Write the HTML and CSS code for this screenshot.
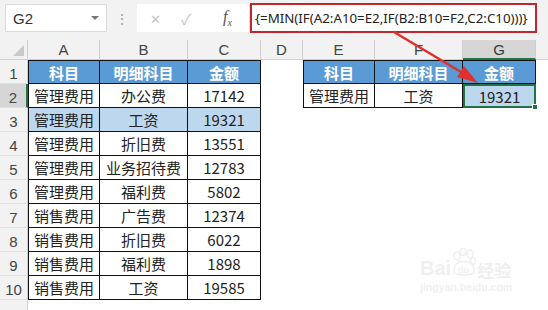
FILE: index.html
```html
<!DOCTYPE html>
<html lang="zh-CN">
<head>
  <meta charset="UTF-8" />
  <title>MIN IF</title>
  <link rel="stylesheet" href="styles.css">
</head>
<body>
  <div class="app">
    <div class="formula-bar">
      <div class="name-box">
        <span>G2</span>
        <span class="drop"></span>
      </div>
      <div class="grip">⋮</div>
      <div class="fx-buttons">
        <span class="btn-x">✕</span>
        <span class="btn-ok">✓</span>
        <span class="btn-fx"><i>f</i><sub>x</sub></span>
      </div>
      <div class="formula">{=MIN(IF(A2:A10=E2,IF(B2:B10=F2,C2:C10)))}</div>
    </div>

    <div class="sheet">
      <div class="corner"><span class="tri"></span></div>
      <div class="col-h">A</div>
      <div class="col-h">B</div>
      <div class="col-h">C</div>
      <div class="col-h">D</div>
      <div class="col-h">E</div>
      <div class="col-h">F</div>
      <div class="col-h sel">G</div>
      <div class="col-h last"></div>

      <!-- row 1 -->
      <div class="row-h">1</div>
      <div class="c t tl tt head">科目</div>
      <div class="c t tt head">明细科目</div>
      <div class="c t tt head">金额</div>
      <div class="c"></div>
      <div class="c t tl tt head">科目</div>
      <div class="c t tt head">明细科目</div>
      <div class="c t tt head">金额</div>
      <div class="c"></div>

      <!-- row 2 -->
      <div class="row-h sel">2</div>
      <div class="c t tl">管理费用</div>
      <div class="c t">办公费</div>
      <div class="c t">17142</div>
      <div class="c"></div>
      <div class="c t tl">管理费用</div>
      <div class="c t">工资</div>
      <div class="c t active">19321<span class="handle"></span></div>
      <div class="c"></div>

      <!-- row 3 -->
      <div class="row-h">3</div>
      <div class="c t tl hl">管理费用</div>
      <div class="c t hl">工资</div>
      <div class="c t hl">19321</div>
      <div class="c"></div><div class="c"></div><div class="c"></div><div class="c"></div><div class="c"></div>

      <div class="row-h">4</div>
      <div class="c t tl">管理费用</div>
      <div class="c t">折旧费</div>
      <div class="c t">13551</div>
      <div class="c"></div><div class="c"></div><div class="c"></div><div class="c"></div><div class="c"></div>

      <div class="row-h">5</div>
      <div class="c t tl">管理费用</div>
      <div class="c t">业务招待费</div>
      <div class="c t">12783</div>
      <div class="c"></div><div class="c"></div><div class="c"></div><div class="c"></div><div class="c"></div>

      <div class="row-h">6</div>
      <div class="c t tl">管理费用</div>
      <div class="c t">福利费</div>
      <div class="c t">5802</div>
      <div class="c"></div><div class="c"></div><div class="c"></div><div class="c"></div><div class="c"></div>

      <div class="row-h">7</div>
      <div class="c t tl">销售费用</div>
      <div class="c t">广告费</div>
      <div class="c t">12374</div>
      <div class="c"></div><div class="c"></div><div class="c"></div><div class="c"></div><div class="c"></div>

      <div class="row-h">8</div>
      <div class="c t tl">销售费用</div>
      <div class="c t">折旧费</div>
      <div class="c t">6022</div>
      <div class="c"></div><div class="c"></div><div class="c"></div><div class="c"></div><div class="c"></div>

      <div class="row-h">9</div>
      <div class="c t tl">销售费用</div>
      <div class="c t">福利费</div>
      <div class="c t">1898</div>
      <div class="c"></div><div class="c"></div><div class="c"></div><div class="c"></div><div class="c"></div>

      <div class="row-h">10</div>
      <div class="c t tl">销售费用</div>
      <div class="c t">工资</div>
      <div class="c t">19585</div>
      <div class="c"></div><div class="c"></div><div class="c"></div><div class="c"></div><div class="c"></div>

      <div class="row-h"></div>
    </div>

    <!-- red arrow pointing from formula to G1 -->
    <svg class="arrow" width="548" height="310" viewBox="0 0 548 310">
      <line x1="394" y1="32" x2="466" y2="75" stroke="#e0302d" stroke-width="2.5" />
      <polygon points="478,83 457,77 464,66" fill="#e0302d" />
    </svg>

    <div class="watermark">
      <div class="wm-logo">
        <span>Bai</span>
        <svg width="26" height="30" viewBox="0 0 26 30">
          <g fill="none" stroke="#efefef" stroke-width="1.5">
            <ellipse cx="6" cy="8" rx="3" ry="4" />
            <ellipse cx="12" cy="4" rx="3" ry="3.5" />
            <ellipse cx="19" cy="6" rx="3" ry="4" />
            <ellipse cx="22" cy="13" rx="2.5" ry="3.5" />
            <path d="M3 24 C3 15 9 12 13 14 C18 12 24 16 23 24 C22 28 4 28 3 24 Z" />
          </g>
          <text x="7" y="25" font-size="9" fill="#efefef" font-family="Liberation Sans, sans-serif">du</text>
        </svg>
        <span class="wm-cn">经验</span>
      </div>
      <div class="wm-url">jingyan.baidu.com</div>
    </div>
  </div>
</body>
</html>
```

FILE: styles.css
```css
* {
  box-sizing: border-box;
}

body {
  margin: 0;
  background: #fff;
  font-family: "Noto Sans CJK SC", "Liberation Sans", sans-serif;
}

.app {
  position: relative;
  width: 548px;
  height: 310px;
  overflow: hidden;
  background: #fff;
}

/* formula bar */

.formula-bar {
  display: flex;
  align-items: center;
  height: 40px;
  padding: 0 11px 4px 5px;
  background: #f2f2f2;
}

.name-box {
  display: flex;
  align-items: center;
  justify-content: space-between;
  width: 102px;
  height: 28px;
  padding: 0 7px 0 7px;
  background: #fff;
  border: 1px solid #dcdcdc;
  font-family: "Liberation Sans", sans-serif;
  font-size: 15px;
  color: #333;
}

.drop {
  width: 0;
  height: 0;
  border-left: 4px solid transparent;
  border-right: 4px solid transparent;
  border-top: 4px solid #777;
}

.grip {
  width: 30px;
  text-align: center;
  color: #a0a0a0;
  font-size: 14px;
}

.fx-buttons {
  display: flex;
  align-items: center;
  width: 113px;
  height: 28px;
  padding-left: 13px;
  background: #fff;
  border-right: 1px solid #e0e0e0;
}

.btn-x {
  width: 31px;
  color: #c4c4c4;
  font-size: 13px;
}

.btn-ok {
  width: 42px;
  color: #c4c4c4;
  font-size: 15px;
}

.btn-fx {
  font-family: "Liberation Serif", serif;
  color: #555;
  font-size: 16px;
}

.btn-fx sub {
  font-size: 10px;
  font-style: italic;
}

.formula {
  flex: 1;
  height: 30px;
  padding: 0 0 0 3px;
  border: 2px solid #c1272d;
  background: #fff;
  font-family: "Noto Sans", sans-serif;
  font-size: 13.3px;
  line-height: 26px;
  color: #222;
  white-space: nowrap;
  overflow: hidden;
}

/* sheet grid */

.sheet {
  display: grid;
  grid-template-columns: 28px 72px 88px 73px 42px 72px 88px 73px 12px;
  grid-template-rows: 20px repeat(10, 24px) 30px;
}

.corner {
  position: relative;
  background: #f2f2f2;
  border-right: 1px solid #d0d0d0;
  border-bottom: 1px solid #d0d0d0;
}

.tri {
  position: absolute;
  right: 3px;
  bottom: 3px;
  width: 0;
  height: 0;
  border-left: 11px solid transparent;
  border-bottom: 11px solid #c8c8c8;
}

.col-h {
  display: flex;
  align-items: center;
  justify-content: center;
  background: #f2f2f2;
  border-right: 1px solid #d0d0d0;
  border-bottom: 1px solid #d0d0d0;
  font-family: "Liberation Sans", sans-serif;
  font-size: 15px;
  color: #444;
}

.col-h.sel {
  background: #d6d6d6;
  border-bottom: 2px solid #217346;
  color: #3a3a3a;
}

.col-h.last {
  border-right: none;
}

.row-h {
  display: flex;
  align-items: flex-end;
  justify-content: center;
  padding-bottom: 1px;
  background: #f2f2f2;
  border-right: 1px solid #d0d0d0;
  border-bottom: 1px solid #e0e0e0;
  font-family: "Liberation Sans", sans-serif;
  font-size: 15px;
  color: #444;
}

.row-h.sel {
  background: #d6d6d6;
  border-right: 2px solid #217346;
}

.c {
  display: flex;
  align-items: center;
  justify-content: center;
  font-size: 15px;
  color: #222;
  white-space: nowrap;
}

.t {
  border-right: 1px solid #111;
  border-bottom: 1px solid #111;
}

.tl {
  border-left: 1px solid #111;
}

.tt {
  border-top: 1px solid #111;
}

.head {
  background: #5b9bd5;
  color: #fff;
  font-weight: bold;
}

.hl {
  background: #bdd7ee;
}

.active {
  position: relative;
  background: #bdd7ee;
  border: 2px solid #217346;
}

.handle {
  position: absolute;
  right: -4px;
  bottom: -4px;
  width: 6px;
  height: 6px;
  background: #217346;
  border: 1px solid #fff;
}

/* overlay */

.arrow {
  position: absolute;
  left: 0;
  top: 0;
  pointer-events: none;
}

.watermark {
  position: absolute;
  left: 420px;
  top: 248px;
  color: #efefef;
}

.wm-logo {
  display: flex;
  align-items: flex-end;
  font-family: "Liberation Sans", sans-serif;
  font-size: 20px;
  font-weight: bold;
  line-height: 1;
}

.wm-cn {
  font-family: "Noto Sans CJK SC", sans-serif;
  font-size: 17px;
}

.wm-url {
  margin-top: 3px;
  font-family: "Liberation Sans", sans-serif;
  font-size: 10.5px;
  font-weight: bold;
}
```
